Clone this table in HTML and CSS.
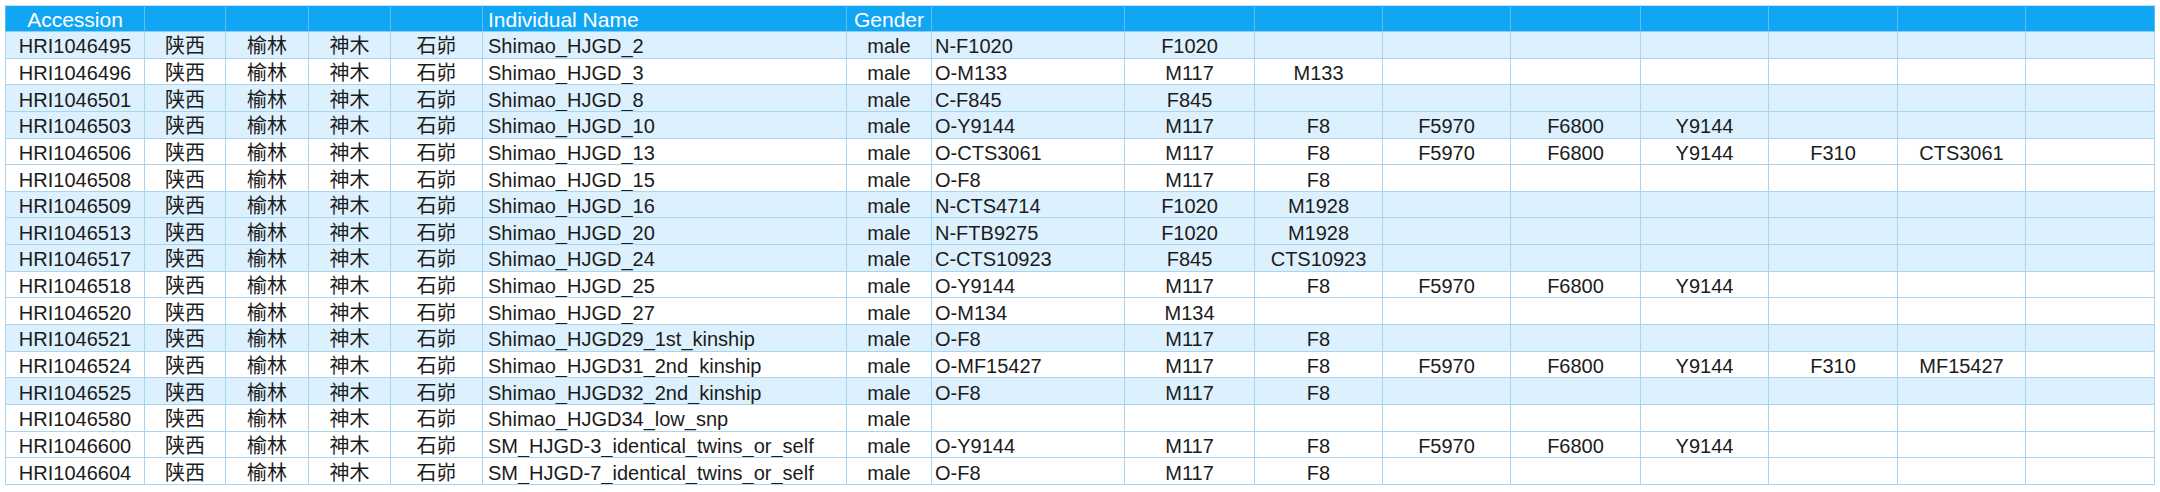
FILE: index.html
```html
<!DOCTYPE html>
<html lang="zh">
<head>
<meta charset="utf-8">
<title>Accession table</title>
<link rel="stylesheet" href="styles.css">
</head>
<body>
<table class="sheet">
  <colgroup>
    <col class="w-acc"><col class="w-prov"><col class="w-city"><col class="w-county"><col class="w-site">
    <col class="w-name"><col class="w-gender"><col class="w-hap">
    <col class="w-snp"><col class="w-snp2"><col class="w-snp2"><col class="w-snp"><col class="w-snp2"><col class="w-snp3"><col class="w-snp2"><col class="w-snp3">
  </colgroup>
  <thead>
    <tr>
      <th class="c">Accession</th><th></th><th></th><th></th><th></th>
      <th class="l">Individual Name</th><th class="c">Gender</th><th></th>
      <th></th><th></th><th></th><th></th><th></th><th></th><th></th><th></th>
    </tr>
  </thead>
  <tbody>
    <tr class="alt"><td class="c">HRI1046495</td><td class="c">陕西</td><td class="c">榆林</td><td class="c">神木</td><td class="c">石峁</td><td class="l">Shimao_HJGD_2</td><td class="c">male</td><td class="h">N-F1020</td><td class="c">F1020</td><td></td><td></td><td></td><td></td><td></td><td></td><td></td></tr>
    <tr><td class="c">HRI1046496</td><td class="c">陕西</td><td class="c">榆林</td><td class="c">神木</td><td class="c">石峁</td><td class="l">Shimao_HJGD_3</td><td class="c">male</td><td class="h">O-M133</td><td class="c">M117</td><td class="c">M133</td><td></td><td></td><td></td><td></td><td></td><td></td></tr>
    <tr class="alt"><td class="c">HRI1046501</td><td class="c">陕西</td><td class="c">榆林</td><td class="c">神木</td><td class="c">石峁</td><td class="l">Shimao_HJGD_8</td><td class="c">male</td><td class="h">C-F845</td><td class="c">F845</td><td></td><td></td><td></td><td></td><td></td><td></td><td></td></tr>
    <tr class="alt"><td class="c">HRI1046503</td><td class="c">陕西</td><td class="c">榆林</td><td class="c">神木</td><td class="c">石峁</td><td class="l">Shimao_HJGD_10</td><td class="c">male</td><td class="h">O-Y9144</td><td class="c">M117</td><td class="c">F8</td><td class="c">F5970</td><td class="c">F6800</td><td class="c">Y9144</td><td></td><td></td><td></td></tr>
    <tr><td class="c">HRI1046506</td><td class="c">陕西</td><td class="c">榆林</td><td class="c">神木</td><td class="c">石峁</td><td class="l">Shimao_HJGD_13</td><td class="c">male</td><td class="h">O-CTS3061</td><td class="c">M117</td><td class="c">F8</td><td class="c">F5970</td><td class="c">F6800</td><td class="c">Y9144</td><td class="c">F310</td><td class="c">CTS3061</td><td></td></tr>
    <tr><td class="c">HRI1046508</td><td class="c">陕西</td><td class="c">榆林</td><td class="c">神木</td><td class="c">石峁</td><td class="l">Shimao_HJGD_15</td><td class="c">male</td><td class="h">O-F8</td><td class="c">M117</td><td class="c">F8</td><td></td><td></td><td></td><td></td><td></td><td></td></tr>
    <tr class="alt"><td class="c">HRI1046509</td><td class="c">陕西</td><td class="c">榆林</td><td class="c">神木</td><td class="c">石峁</td><td class="l">Shimao_HJGD_16</td><td class="c">male</td><td class="h">N-CTS4714</td><td class="c">F1020</td><td class="c">M1928</td><td></td><td></td><td></td><td></td><td></td><td></td></tr>
    <tr class="alt"><td class="c">HRI1046513</td><td class="c">陕西</td><td class="c">榆林</td><td class="c">神木</td><td class="c">石峁</td><td class="l">Shimao_HJGD_20</td><td class="c">male</td><td class="h">N-FTB9275</td><td class="c">F1020</td><td class="c">M1928</td><td></td><td></td><td></td><td></td><td></td><td></td></tr>
    <tr class="alt"><td class="c">HRI1046517</td><td class="c">陕西</td><td class="c">榆林</td><td class="c">神木</td><td class="c">石峁</td><td class="l">Shimao_HJGD_24</td><td class="c">male</td><td class="h">C-CTS10923</td><td class="c">F845</td><td class="c">CTS10923</td><td></td><td></td><td></td><td></td><td></td><td></td></tr>
    <tr><td class="c">HRI1046518</td><td class="c">陕西</td><td class="c">榆林</td><td class="c">神木</td><td class="c">石峁</td><td class="l">Shimao_HJGD_25</td><td class="c">male</td><td class="h">O-Y9144</td><td class="c">M117</td><td class="c">F8</td><td class="c">F5970</td><td class="c">F6800</td><td class="c">Y9144</td><td></td><td></td><td></td></tr>
    <tr><td class="c">HRI1046520</td><td class="c">陕西</td><td class="c">榆林</td><td class="c">神木</td><td class="c">石峁</td><td class="l">Shimao_HJGD_27</td><td class="c">male</td><td class="h">O-M134</td><td class="c">M134</td><td></td><td></td><td></td><td></td><td></td><td></td><td></td></tr>
    <tr class="alt"><td class="c">HRI1046521</td><td class="c">陕西</td><td class="c">榆林</td><td class="c">神木</td><td class="c">石峁</td><td class="l">Shimao_HJGD29_1st_kinship</td><td class="c">male</td><td class="h">O-F8</td><td class="c">M117</td><td class="c">F8</td><td></td><td></td><td></td><td></td><td></td><td></td></tr>
    <tr><td class="c">HRI1046524</td><td class="c">陕西</td><td class="c">榆林</td><td class="c">神木</td><td class="c">石峁</td><td class="l">Shimao_HJGD31_2nd_kinship</td><td class="c">male</td><td class="h">O-MF15427</td><td class="c">M117</td><td class="c">F8</td><td class="c">F5970</td><td class="c">F6800</td><td class="c">Y9144</td><td class="c">F310</td><td class="c">MF15427</td><td></td></tr>
    <tr class="alt"><td class="c">HRI1046525</td><td class="c">陕西</td><td class="c">榆林</td><td class="c">神木</td><td class="c">石峁</td><td class="l">Shimao_HJGD32_2nd_kinship</td><td class="c">male</td><td class="h">O-F8</td><td class="c">M117</td><td class="c">F8</td><td></td><td></td><td></td><td></td><td></td><td></td></tr>
    <tr><td class="c">HRI1046580</td><td class="c">陕西</td><td class="c">榆林</td><td class="c">神木</td><td class="c">石峁</td><td class="l">Shimao_HJGD34_low_snp</td><td class="c">male</td><td class="h"></td><td></td><td></td><td></td><td></td><td></td><td></td><td></td><td></td></tr>
    <tr><td class="c">HRI1046600</td><td class="c">陕西</td><td class="c">榆林</td><td class="c">神木</td><td class="c">石峁</td><td class="l">SM_HJGD-3_identical_twins_or_self</td><td class="c">male</td><td class="h">O-Y9144</td><td class="c">M117</td><td class="c">F8</td><td class="c">F5970</td><td class="c">F6800</td><td class="c">Y9144</td><td></td><td></td><td></td></tr>
    <tr><td class="c">HRI1046604</td><td class="c">陕西</td><td class="c">榆林</td><td class="c">神木</td><td class="c">石峁</td><td class="l">SM_HJGD-7_identical_twins_or_self</td><td class="c">male</td><td class="h">O-F8</td><td class="c">M117</td><td class="c">F8</td><td></td><td></td><td></td><td></td><td></td><td></td></tr>
  </tbody>
</table>
</body>
</html>
```
FILE: styles.css
```css
html, body {
  margin: 0;
  padding: 0;
  background: #ffffff;
}

body {
  padding: 5px 5px 0 5px;
  font-family: "Liberation Sans", "Noto Sans CJK SC", sans-serif;
  color: #1b1b1b;
}

.sheet {
  table-layout: fixed;
  width: 2150px;
  border-collapse: separate;
  border-spacing: 0;
  font-size: 20px;
}

.w-acc { width: 140px; }
.w-prov { width: 81px; }
.w-city { width: 83px; }
.w-county { width: 82px; }
.w-site { width: 92px; }
.w-name { width: 364px; }
.w-gender { width: 85px; }
.w-hap { width: 193px; }
.w-snp { width: 130px; }
.w-snp2 { width: 128px; }
.w-snp3 { width: 129px; }

.sheet th,
.sheet td {
  box-sizing: border-box;
  padding: 3px 0 0 0;
  line-height: 22px;
  white-space: nowrap;
  overflow: hidden;
  vertical-align: middle;
  border-right: 1px solid #a9d5f0;
  border-bottom: 1px solid #a9d5f0;
}

.sheet th:first-child,
.sheet td:first-child {
  border-left: 1px solid #a9d5f0;
}

.sheet th {
  height: 27px;
  background: #11a6f4;
  color: #ffffff;
  font-weight: normal;
  font-size: 21px;
  border-top: 1px solid #c9e9fb;
  border-right-color: #5dbdf1;
  border-bottom-color: #8ccdf2;
}

.sheet th:first-child {
  border-left-color: #5dbdf1;
}

.sheet td {
  height: 26.65px;
  background: #ffffff;
}

.sheet tr.alt td {
  background: #ddf0fd;
}

.c { text-align: center; }
.l { text-align: left; padding-left: 5px !important; }
.h { text-align: left; padding-left: 3px !important; }
```
